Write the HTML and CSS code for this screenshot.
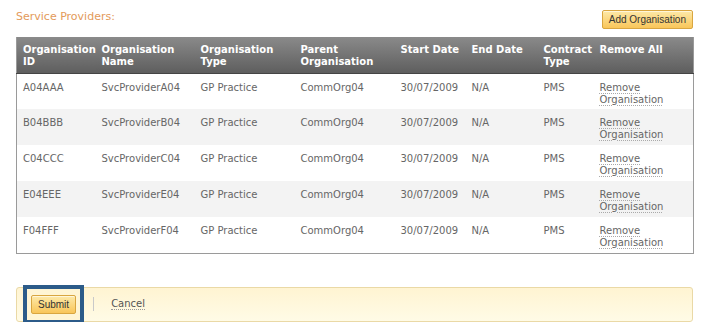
FILE: index.html
```
<!DOCTYPE html>
<html lang="en">
<head>
    <meta charset="UTF-8">
    <title>Service Providers</title>
    <link rel="stylesheet" href="styles.css">
</head>
<body>
    <div class="page">
        <div class="section-head">
            <h2 class="section-title">Service Providers:</h2>
            <button class="btn">Add Organisation</button>
        </div>

        <table class="grid">
            <colgroup>
                <col style="width: 79px">
                <col style="width: 99px">
                <col style="width: 100px">
                <col style="width: 100px">
                <col style="width: 71px">
                <col style="width: 72px">
                <col style="width: 56px">
                <col style="width: 100px">
            </colgroup>
            <thead>
                <tr>
                    <th>Organisation ID</th>
                    <th>Organisation Name</th>
                    <th>Organisation Type</th>
                    <th>Parent Organisation</th>
                    <th>Start Date</th>
                    <th>End Date</th>
                    <th>Contract Type</th>
                    <th>Remove All</th>
                </tr>
            </thead>
            <tbody>
                <tr>
                    <td>A04AAA</td><td>SvcProviderA04</td><td>GP Practice</td><td>CommOrg04</td>
                    <td>30/07/2009</td><td>N/A</td><td>PMS</td><td><a href="#" class="link">Remove Organisation</a></td>
                </tr>
                <tr class="alt">
                    <td>B04BBB</td><td>SvcProviderB04</td><td>GP Practice</td><td>CommOrg04</td>
                    <td>30/07/2009</td><td>N/A</td><td>PMS</td><td><a href="#" class="link">Remove Organisation</a></td>
                </tr>
                <tr>
                    <td>C04CCC</td><td>SvcProviderC04</td><td>GP Practice</td><td>CommOrg04</td>
                    <td>30/07/2009</td><td>N/A</td><td>PMS</td><td><a href="#" class="link">Remove Organisation</a></td>
                </tr>
                <tr class="alt">
                    <td>E04EEE</td><td>SvcProviderE04</td><td>GP Practice</td><td>CommOrg04</td>
                    <td>30/07/2009</td><td>N/A</td><td>PMS</td><td><a href="#" class="link">Remove Organisation</a></td>
                </tr>
                <tr>
                    <td>F04FFF</td><td>SvcProviderF04</td><td>GP Practice</td><td>CommOrg04</td>
                    <td>30/07/2009</td><td>N/A</td><td>PMS</td><td><a href="#" class="link">Remove Organisation</a></td>
                </tr>
            </tbody>
        </table>

        <div class="actions">
            <div class="focus-box">
                <button class="btn">Submit</button>
            </div>
            <span class="sep"></span>
            <a href="#" class="link cancel">Cancel</a>
        </div>
    </div>
</body>
</html>
```

FILE: styles.css
```
body {
    margin: 0;
    background: #fff;
    font-family: "DejaVu Sans", Verdana, sans-serif;
    font-size: 10px;
    color: #666;
}

.page {
    padding: 8px 16px 0 16px;
    width: 677px;
}

.section-head {
    display: flex;
    justify-content: space-between;
    align-items: flex-start;
    height: 29px;
}

.section-title {
    margin: 2px 0 0 0;
    font-size: 11px;
    font-weight: normal;
    color: #e39a5a;
}

.btn {
    font-family: "Liberation Sans", Arial, sans-serif;
    font-size: 10px;
    color: #333;
    height: 19px;
    padding: 0 6px;
    margin-top: 2px;
    border: 1px solid #d9a640;
    border-radius: 2px;
    background: linear-gradient(#fde9a8, #f9c65a);
    box-shadow: inset 0 1px 0 #fff6d8;
}

.grid {
    table-layout: fixed;
    width: 677px;
    border-collapse: collapse;
    border: 1px solid #9a9a9a;
    border-top: none;
}

.grid th {
    text-align: left;
    vertical-align: top;
    color: #fff;
    font-weight: bold;
    line-height: 12px;
    height: 36px;
    padding: 7px 4px 0 6px;
    box-sizing: border-box;
    background: linear-gradient(#8a8a8a, #5e5e5e);
    border-bottom: 1px solid #444;
}

.grid td {
    vertical-align: top;
    line-height: 12px;
    height: 36px;
    padding: 8px 4px 0 6px;
    box-sizing: border-box;
}

.grid tr.alt td {
    background: #f3f3f3;
}

.link {
    color: #666;
    text-decoration: none;
    border-bottom: 1px dotted #999;
}

.grid .link {
    border-bottom: none;
    text-decoration: underline dotted #aaa;
    text-underline-offset: 2px;
}

.actions {
    margin-top: 33px;
    height: 33px;
    display: flex;
    align-items: center;
    border: 1px solid #ead9a6;
    border-radius: 3px;
    background: linear-gradient(#fff4d2, #fffbe6);
}

.focus-box {
    margin-left: 6px;
    height: 31px;
    padding: 0 4px;
    display: flex;
    align-items: center;
    border: 4px solid #2c5b89;
    background: #fff5d4;
}

.focus-box .btn {
    margin-top: 0;
}

.sep {
    width: 1px;
    height: 14px;
    background: #c9c9c9;
    margin: 0 17px 0 9px;
}

.cancel {
    color: #555;
}
```
